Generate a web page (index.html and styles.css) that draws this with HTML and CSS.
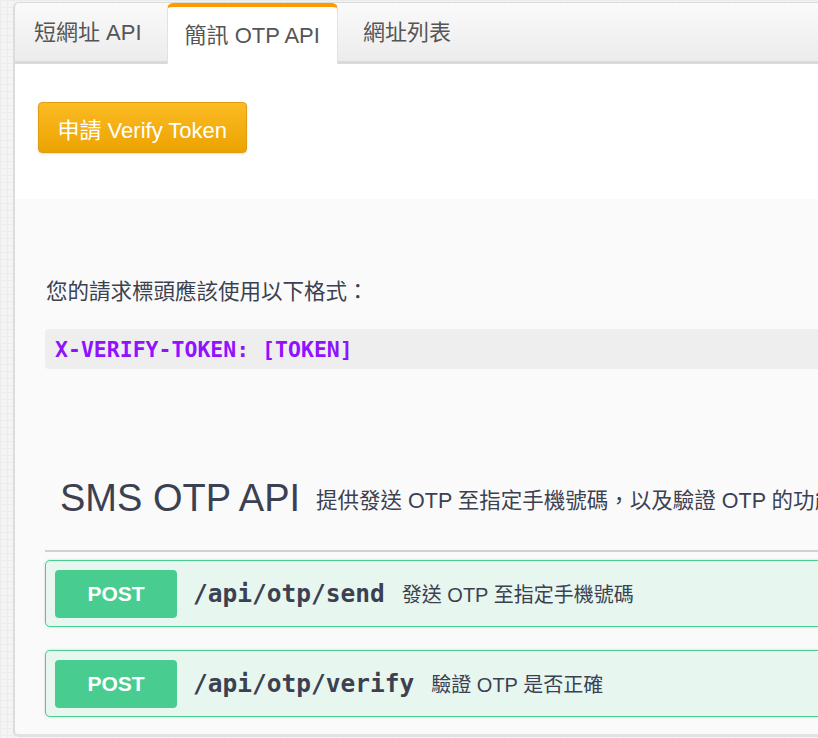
FILE: index.html
```html
<!DOCTYPE html>
<html lang="zh-Hant">
<head>
  <meta charset="UTF-8">
  <title>簡訊 OTP API</title>
  <link rel="stylesheet" href="styles.css">
</head>
<body>

  <div class="page">
    <div class="panel">

      <ul class="tabs">
        <li class="tab">短網址 API</li>
        <li class="tab active">簡訊 OTP API</li>
        <li class="tab">網址列表</li>
      </ul>

      <div class="token-box">
        <button class="btn-token">申請 Verify Token</button>
      </div>

      <div class="swagger">
        <p class="hint">您的請求標頭應該使用以下格式：</p>
        <pre class="code">X-VERIFY-TOKEN: [TOKEN]</pre>

        <h3 class="tag">
          <span class="tag-name">SMS OTP API</span>
          <small class="tag-desc">提供發送 OTP 至指定手機號碼，以及驗證 OTP 的功能</small>
        </h3>

        <div class="opblock">
          <span class="method">POST</span>
          <span class="path">/api/otp/send</span>
          <span class="summary">發送 OTP 至指定手機號碼</span>
        </div>

        <div class="opblock">
          <span class="method">POST</span>
          <span class="path">/api/otp/verify</span>
          <span class="summary">驗證 OTP 是否正確</span>
        </div>
      </div>

    </div>
  </div>

</body>
</html>
```

FILE: styles.css
```css
html, body {
  margin: 0;
  overflow: hidden;
}
body {
  background-color: #f4f4f4;
  background-image:
    linear-gradient(#ececec 1px, transparent 1px),
    linear-gradient(90deg, #ececec 1px, transparent 1px);
  background-size: 7px 7px;
  font-family: "Liberation Sans", "Noto Sans CJK TC", sans-serif;
  color: #3b4151;
}
.page {
  padding: 2px 0 0 13px;
}
.panel {
  width: 880px;
  height: 731px;
  overflow: hidden;
  background: #fafafa;
  border: 1px solid #dcdcdc;
  border-left-width: 2px;
  border-bottom: 3px solid #e2e2e2;
  border-radius: 6px;
}

/* tabs */
.tabs {
  display: flex;
  margin: 0;
  padding: 0;
  list-style: none;
  height: 58px;
  background: linear-gradient(#fafafa, #ececec);
  border-bottom: 3px solid #dadada;
}
.tab {
  padding: 0 19px;
  margin-right: 6px;
  font-size: 22px;
  line-height: 60px;
  color: #555;
}
.tab.active {
  padding: 0 17px;
  background: #fff;
  border: 1px solid #e2e2e2;
  border-top: 4px solid #ff9900;
  border-bottom: none;
  border-radius: 6px 6px 0 0;
  line-height: 57px;
  height: 57px;
  margin-bottom: -3px;
}

/* token */
.token-box {
  background: #fff;
  padding: 38px 23px 46px;
}
.btn-token {
  font-family: "Liberation Sans", "Noto Sans CJK TC", sans-serif;
  font-size: 22px;
  color: #fff;
  height: 51px;
  padding: 0 18.5px;
  background: linear-gradient(#fcbb24, #eba300);
  border: 1px solid #df9e12;
  border-radius: 4px;
  box-shadow: 0 1px 2px rgba(0,0,0,0.12);
  cursor: pointer;
}

/* swagger area */
.swagger {
  padding: 78px 0 0 30px;
}
.hint {
  margin: 0 0 21px 1px;
  font-size: 21.5px;
  line-height: 31px;
}
.code {
  margin: 0;
  padding: 0 10px;
  height: 40px;
  line-height: 41px;
  background: #eeeeee;
  border-radius: 4px;
  font-family: "DejaVu Sans Mono", monospace;
  font-weight: bold;
  font-size: 21.5px;
  color: #9012fe;
}
.tag {
  display: flex;
  align-items: center;
  white-space: nowrap;
  margin: 76px 0 8px;
  padding: 24px 15px 23px;
  height: 58px;
  font-weight: normal;
  border-bottom: 2px solid #d0d1d4;
}
.tag-name {
  font-size: 38px;
}
.tag-desc {
  font-size: 21.5px;
  padding-left: 16px;
}

/* operations */
.opblock {
  display: flex;
  align-items: center;
  height: 49px;
  padding: 8px 9px;
  margin-bottom: 23px;
  background: #e8f6f0;
  border: 1px solid #49cc90;
  border-radius: 5px;
  box-shadow: 0 0 3px rgba(0,0,0,0.15);
  white-space: nowrap;
}
.method {
  width: 122px;
  height: 48px;
  line-height: 48px;
  text-align: center;
  background: #49cc90;
  color: #fff;
  font-weight: bold;
  font-size: 21px;
  border-radius: 4px;
}
.path {
  padding: 0 17px 0 16px;
  font-family: "DejaVu Sans Mono", monospace;
  font-weight: bold;
  font-size: 24.5px;
}
.summary {
  font-size: 20px;
}
```
